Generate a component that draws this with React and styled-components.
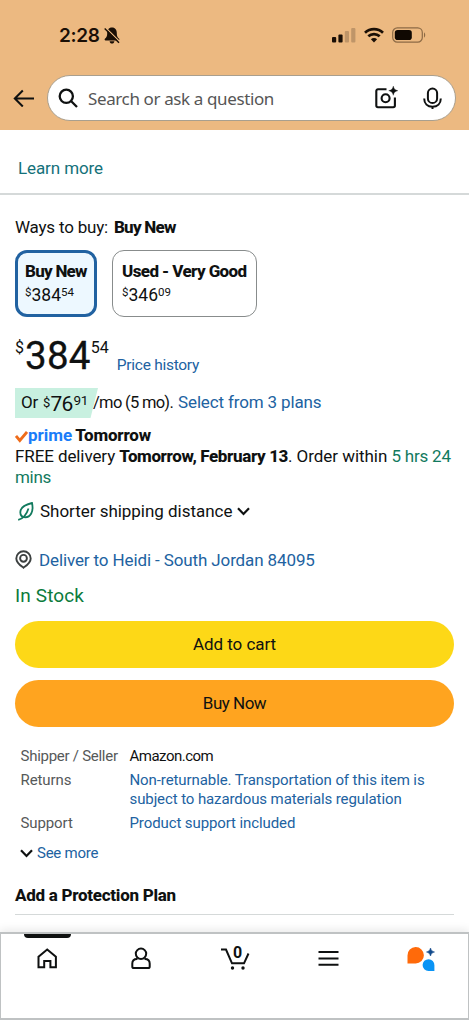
import React from 'react'
import styled, { createGlobalStyle } from 'styled-components'

const GlobalStyle = createGlobalStyle`
  * {
    box-sizing: border-box;
  }
  body {
    margin: 0;
    background: #fff;
    font-family: Roboto, 'Liberation Sans', sans-serif;
    color: #0f1111;
  }
`

const colors = {
  header: '#ecb981',
  link: '#2162a1',
  teal: '#14717a',
  green: '#0b7b3c',
  timer: '#127a5e',
  muted: '#565959',
}

const Screen = styled.div`
  display: flex;
  flex-direction: column;
  width: 469px;
  height: 1020px;
  overflow: hidden;
  background: #fff;
`

const Header = styled.header`
  flex: none;
  height: 130px;
  background: ${colors.header};
`

const StatusBar = styled.div`
  display: flex;
  align-items: center;
  height: 75px;
  padding: 0 43px 5px 59px;
`

const Clock = styled.span`
  font: 600 19px/24px Inter, sans-serif;
  letter-spacing: -0.3px;
  color: #1a0f06;
  margin-right: 4px;
  padding-top: 1px;
`

const StatusIcons = styled.div`
  display: flex;
  align-items: center;
  gap: 8px;
  margin-left: auto;
`

const SearchRow = styled.div`
  display: flex;
  align-items: center;
  padding: 0 13px;
`

const SearchBox = styled.div`
  display: flex;
  align-items: center;
  flex: 1;
  height: 46px;
  margin-left: 13px;
  padding: 0 13px 0 10px;
  background: #fff;
  border: 1px solid #a99f8e;
  border-radius: 23px;
`

const Placeholder = styled.span`
  flex: 1;
  margin-left: 10px;
  padding-top: 1px;
  font: 17px/24px 'Noto Sans', sans-serif;
  letter-spacing: -0.38px;
  color: #565656;
`

const Icon = styled.svg`
  flex: none;
  display: block;
  fill: none;
  stroke: ${(p) => p.$color || '#0f1111'};
  stroke-width: ${(p) => p.$stroke || 2};
`

const LearnMore = styled.div`
  flex: none;
  height: 65px;
  padding: 28px 18px 0;
  border-bottom: 2px solid #d5d9d9;
  line-height: 20px;
`

const Text = styled.span`
  font-size: ${(p) => p.$size || 17}px;
  font-weight: ${(p) => p.$weight || 400};
  letter-spacing: ${(p) => p.$spacing || 0}px;
  color: ${(p) => p.$color || 'inherit'};
  margin-left: ${(p) => p.$left || 0}px;
  white-space: nowrap;
`

const Main = styled.main`
  flex: 1;
  min-height: 0;
  padding: 22px 15px 0;
`

const Row = styled.div`
  display: flex;
  align-items: center;
  height: ${(p) => p.$height}px;
  line-height: ${(p) => p.$height}px;
  margin-top: ${(p) => p.$top || 0}px;
  white-space: nowrap;
`

const Options = styled.div`
  display: flex;
  gap: 15px;
  margin-top: 13px;
`

const Option = styled.div`
  width: ${(p) => p.$width}px;
  height: 67px;
  padding: ${(p) => (p.$selected ? '7px 7px' : '9px 9px')};
  border: ${(p) => (p.$selected ? '3px solid #2162a1' : '1px solid #888c8c')};
  border-radius: 12px;
  background: ${(p) => (p.$selected ? '#edf8ff' : '#fff')};
  line-height: 22px;
`

const OptionPrice = styled.div`
  display: flex;
  height: 24px;
  line-height: 24px;
  font-size: 17.5px;
`

const Small = styled.span`
  font-size: ${(p) => p.$size}px;
  line-height: ${(p) => p.$line}px;
  letter-spacing: ${(p) => p.$spacing || 0}px;
  margin-left: ${(p) => p.$left || 0}px;
`

const BigPrice = styled.div`
  display: flex;
  height: 41px;
  font-size: 38.5px;
  line-height: 41px;
`

const Whole = styled.span`
  margin-left: 1px;
  letter-spacing: 0.3px;
  -webkit-text-stroke: 0.3px currentColor;
`

const PriceRow = styled.div`
  display: flex;
  margin-top: 18px;
`

const Financing = styled.div`
  display: flex;
  height: 30px;
  margin-top: 12px;
  line-height: 29px;
  white-space: nowrap;
`

const Installment = styled.div`
  display: flex;
  width: 83px;
  height: 30px;
  padding-left: 6px;
  background: #c8f0e0;
  clip-path: polygon(0 0, 100% 0, 91% 100%, 0 100%);
`

const Delivery = styled.div`
  height: 42px;
  line-height: 21px;
`

const Button = styled.button`
  display: block;
  width: 439px;
  height: 47px;
  margin: ${(p) => p.$top}px 0 0;
  padding: 0;
  border: 0;
  border-radius: 24px;
  background: ${(p) => p.$bg};
  font: 400 17px/47px Roboto, sans-serif;
  letter-spacing: ${(p) => p.$spacing}px;
  color: #0f1111;
`

const Details = styled.dl`
  display: grid;
  grid-template-columns: 109px 1fr;
  row-gap: 4px;
  margin: 20px 0 0;
  padding-left: 5.5px;
  font-size: 15px;
  line-height: 19.5px;
  letter-spacing: -0.1px;
  dt {
    color: ${colors.muted};
  }
  dd {
    margin: 0;
    white-space: nowrap;
  }
`

const SectionTitle = styled.h2`
  height: 31px;
  margin: 21px 0 0;
  border-bottom: 1px solid #d5d9d9;
  font-size: 17px;
  font-weight: 800;
  letter-spacing: -0.28px;
  line-height: 22px;
`

const Nav = styled.nav`
  position: relative;
  flex: none;
  display: flex;
  height: 88px;
  border: 2px solid #bfc2c3;
  border-width: 2px 1px 2px 1px;
  background: #fff;
  box-shadow: 0 -3px 8px rgba(0, 0, 0, 0.08);
`

const Tab = styled.div`
  display: flex;
  flex: 1;
  flex-direction: column;
  align-items: center;
  &::before {
    content: '';
    width: 47px;
    height: 4px;
    margin-bottom: 6px;
    border-radius: 0 0 4px 4px;
    background: ${(p) => (p.$active ? '#0f1111' : 'transparent')};
  }
`

const CartCount = styled.text`
  font: 700 16px Roboto, sans-serif;
  fill: #0f1111;
  stroke: none;
`

const Chevron = () => (
  <Icon width="13" height="9" viewBox="0 0 13 9" $stroke={2.2}>
    <path d="M1 1.3 6.5 7 12 1.3" />
  </Icon>
)

const MutedBell = () => (
  <Icon width="16" height="17" viewBox="0 0 16 17" $color="#1a0f06">
    <path
      d="M8 .6C4.600.6 3.200 3.200 3.200 6.200c0 3-.6 4-2.300 5.600-.6.7-.3 1.700.7 1.700h12.800c1 0 1.300-1 .7-1.700-1.700-1.600-2.300-2.600-2.300-5.600C12.800 3.200 11.400.6 8 .6zM5.600 14.300h4.800C10.200 15.800 9.300 16.600 8 16.600s-2.200-.8-2.400-2.300z"
      fill="#1a0f06"
      stroke="none"
    />
    <path d="M1.900.9 16 15" stroke={colors.header} strokeWidth="1.300" />
    <path d="M.7 1.500 15 15.800" strokeWidth="1.400" />
  </Icon>
)

const Signal = () => (
  <Icon width="24" height="16" viewBox="0 0 24 16" $color="none">
    <rect x="0" y="10" width="4.200" height="5.500" rx="1" fill="#1a0f06" />
    <rect x="6.400" y="7.500" width="4.200" height="8" rx="1" fill="#1a0f06" />
    <rect x="12.800" y="4" width="4.200" height="11.500" rx="1" fill="#bf9568" />
    <rect x="19.200" y="1" width="4.200" height="14.500" rx="1" fill="#bf9568" />
  </Icon>
)

const Wifi = () => (
  <Icon width="20" height="16" viewBox="0 0 20 16" $color="#1a0f06" $stroke={2.7}>
    <path d="M1 5.700a13 13 0 0 1 18 0M4.300 9.300a8.300 8.300 0 0 1 11.400 0" />
    <path d="M10 15.500 6.900 12.200a4.400 4.400 0 0 1 6.200 0z" fill="#1a0f06" stroke="none" />
  </Icon>
)

const Battery = () => (
  <Icon width="34" height="16" viewBox="0 0 34 16" $color="#8c6a45" $stroke={1.2}>
    <rect x=".7" y=".9" width="29.600" height="14.200" rx="4.600" />
    <rect x="2.800" y="3" width="17" height="10" rx="2.800" fill="#100802" stroke="none" />
    <path d="M32 5.500c1.600.5 1.600 4.500 0 5z" fill="#8c6a45" stroke="none" />
  </Icon>
)

const App = () => (
  <>
    <GlobalStyle />
    <Screen>
      <Header>
        <StatusBar>
          <Clock>2:28</Clock>
          <MutedBell />
          <StatusIcons>
            <Signal />
            <Wifi />
            <Battery />
          </StatusIcons>
        </StatusBar>
        <SearchRow>
          <Icon width="21" height="18" viewBox="0 0 21 18">
            <path d="M21 9.500H2M9.800 1.500 1.800 9.500l8 8" />
          </Icon>
          <SearchBox>
            <Icon width="20" height="20" viewBox="0 0 20 20" $stroke={2.3}>
              <circle cx="8.300" cy="8.300" r="6.600" />
              <path d="m13 13 6 6" />
            </Icon>
            <Placeholder>Search or ask a question</Placeholder>
            <Icon width="24" height="24" viewBox="0 0 24 24" $stroke={2.1}>
              <path d="M12.500 3.200H4a1.700 1.700 0 0 0-1.700 1.700v14.600A1.700 1.700 0 0 0 4 21.200h15.200a1.700 1.700 0 0 0 1.700-1.700V11.500" />
              <circle cx="11.600" cy="12.200" r="4" />
              <path
                d="M19.300.1c.9 3.100 1.400 3.700 4.600 4.600-3.200.9-3.700 1.500-4.600 4.600-.9-3.100-1.400-3.700-4.600-4.600 3.200-.9 3.700-1.500 4.600-4.600z"
                fill="#0f1111"
                stroke="#0f1111"
                strokeWidth=".3"
              />
            </Icon>
            <Text $left={24}>
              <Icon width="20" height="23" viewBox="0 0 20 23">
                <rect x="5.900" y="1.500" width="9.200" height="14.500" rx="4.600" />
                <path d="M2.200 11.500c0 5 3.300 8.200 8.300 8.200s8.300-3.200 8.300-8.200M10.500 19.500V22" />
              </Icon>
            </Text>
          </SearchBox>
        </SearchRow>
      </Header>

      <LearnMore>
        <Text $color={colors.teal} $spacing={-0.1}>Learn more</Text>
      </LearnMore>

      <Main>
        <Row $height={20}>
          <Text $spacing={-0.2}>Ways to buy:</Text>
          <Text $weight={800} $left={6} $spacing={-0.75}>Buy New</Text>
        </Row>
        <Options>
          <Option $selected $width={82}>
            <Text $weight={800} $spacing={-0.75}>Buy New</Text>
            <OptionPrice>
              <Small $size={11.5} $line={19}>$</Small>
              384
              <Small $size={11.5} $line={19}>54</Small>
            </OptionPrice>
          </Option>
          <Option $width={145}>
            <Text $weight={800} $spacing={-0.6}>Used - Very Good</Text>
            <OptionPrice>
              <Small $size={11.5} $line={19}>$</Small>
              346
              <Small $size={11.5} $line={19}>09</Small>
            </OptionPrice>
          </Option>
        </Options>

        <PriceRow>
          <BigPrice>
            <Small $size={16} $line={26}>$</Small>
            <Whole>384</Whole>
            <Small $size={16} $line={26}>54</Small>
          </BigPrice>
          <Row $height={20} $top={20}>
            <Text $size={15.5} $left={8} $spacing={-0.27} $color={colors.link}>Price history</Text>
          </Row>
        </PriceRow>

        <Financing>
          <Installment>
            <Text $spacing={-0.2}>Or</Text>
            <Text $size={13} $left={5}>$</Text>
            <Small $size={21} $line={32} $spacing={-0.7}>76</Small>
            <Small $size={13.5} $line={25} $left={1} $spacing={-0.4}>91</Small>
          </Installment>
          <Text $size={16.5} $left={-5} $spacing={-0.7}>/mo (5 mo).</Text>
          <Text $left={5} $spacing={-0.15} $color={colors.link}>Select from 3 plans</Text>
        </Financing>

        <Row $height={21} $top={7}>
          <Icon width="13" height="15" viewBox="0 0 13 15" $color="#ef6c1a" $stroke={2.8}>
            <path d="m1 8 3.800 4.500L12 4" />
          </Icon>
          <Text $weight={700} $color="#1a7cf9">prime</Text>
          <Text $weight={800} $left={3} $spacing={-0.2}>Tomorrow</Text>
        </Row>
        <Delivery>
          <Text $spacing={-0.1}>FREE delivery </Text>
          <Text $weight={800} $spacing={-0.38}>Tomorrow, February 13</Text>
          <Text $spacing={-0.05}>. Order within </Text>
          <Text $spacing={-0.2} $color={colors.timer}>5 hrs 24</Text>
          <br />
          <Text $spacing={-0.3} $color={colors.timer}>mins</Text>
        </Delivery>

        <Row $height={20} $top={13}>
          <Icon width="21" height="19" viewBox="0 0 21 19" $color={colors.timer} $stroke={1.8}>
            <path d="M17 1C10.500 2.500 5.300 5 5.300 10.300c0 3.300 2.200 5 5 5C15.200 15.300 19 10 17 1zM13.500 6.500c-1.500 4.800-4.500 10-10.300 11.300" />
          </Icon>
          <Text $left={4} $spacing={-0.03}>Shorter shipping distance</Text>
          <Text $left={5}>
            <Chevron />
          </Text>
        </Row>

        <Row $height={22} $top={28}>
          <Icon width="17" height="21" viewBox="0 0 17 21" $color="#3c4040" $stroke={1.9}>
            <path d="M8.500 17.700C7 16.500 1.300 13.200 1.300 8.400a7.200 7.200 0 0 1 14.400 0c0 4.800-5.700 8.100-7.200 9.300z" />
            <circle cx="8.500" cy="8.300" r="3.400" />
          </Icon>
          <Text $left={7} $spacing={-0.12} $color={colors.link}>Deliver to Heidi - South Jordan 84095</Text>
        </Row>

        <Row $height={26} $top={12}>
          <Text $size={19} $spacing={0.12} $color={colors.green}>In Stock</Text>
        </Row>

        <Button $top={12} $bg="#fdd817" $spacing={-0.05}>Add to cart</Button>
        <Button $top={12} $bg="#ffa41f" $spacing={-0.5}>Buy Now</Button>

        <Details>
          <dt>
            <Text $size={15} $spacing={-0.27}>Shipper / Seller</Text>
          </dt>
          <dd>
            <Text $size={15} $spacing={-0.5}>Amazon.com</Text>
          </dd>
          <dt>Returns</dt>
          <dd>
            <Text $size={15} $spacing={-0.09} $color={colors.link}>
              Non-returnable. Transportation of this item is
            </Text>
            <br />
            <Text $size={15} $spacing={-0.1} $color={colors.link}>
              subject to hazardous materials regulation
            </Text>
          </dd>
          <dt>Support</dt>
          <dd>
            <Text $size={15} $spacing={-0.1} $color={colors.link}>Product support included</Text>
          </dd>
        </Details>

        <Row $height={20} $top={10}>
          <Text $left={5}>
            <Chevron />
          </Text>
          <Text $size={15} $left={4} $spacing={-0.25} $color={colors.link}>See more</Text>
        </Row>

        <SectionTitle>Add a Protection Plan</SectionTitle>
      </Main>

      <Nav>
        <Tab $active>
          <Icon width="24" height="28" viewBox="0 0 24 28">
            <path d="M2.500 23.200V12.800l8.700-7.200 8.700 7.200v10.400h-5.500V17H8.200v6.200z" />
          </Icon>
        </Tab>
        <Tab>
          <Icon width="24" height="28" viewBox="0 0 24 28">
            <circle cx="12" cy="9.800" r="5.200" />
            <path d="M8.500 15H8c-2.800 0-4.700 1.700-4.700 4.600v2.800c0 1.100.6 1.700 1.700 1.700h14c1.100 0 1.700-.6 1.700-1.700v-2.800c0-2.900-1.900-4.600-4.700-4.600h-.5" />
          </Icon>
        </Tab>
        <Tab>
          <Icon width="30" height="28" viewBox="0 0 30 28">
            <path d="M1 5.500h5l6 13.800h12l4.500-9.800" />
            <circle cx="12.500" cy="24" r="1.700" fill="#0f1111" stroke="none" />
            <circle cx="23" cy="24" r="1.700" fill="#0f1111" stroke="none" />
            <CartCount x="13" y="13.500">0</CartCount>
          </Icon>
        </Tab>
        <Tab>
          <Icon width="24" height="28" viewBox="0 0 24 28">
            <path d="M2.500 8h20M2.500 14.500h20M2.500 20.800h20" />
          </Icon>
        </Tab>
        <Tab>
          <Icon width="30" height="28" viewBox="0 0 30 28" $color="none">
            <path d="M1.500 19.500V11.500A8.200 8.200 0 1 1 9.700 19.500z" fill="#ff6a0a" />
            <path d="M28.400 27v-5.700a5.900 5.900 0 1 0-5.900 5.700z" fill="#0a94f5" />
            <path d="M24.500 4c1 2.800 1.300 3.100 4 4-2.700.9-3 1.200-4 4-1-2.800-1.300-3.100-4-4 2.700-.9 3-1.200 4-4z" fill="#124a8c" stroke="#124a8c" strokeWidth=".6" />
          </Icon>
        </Tab>
      </Nav>
    </Screen>
  </>
)

export default App
